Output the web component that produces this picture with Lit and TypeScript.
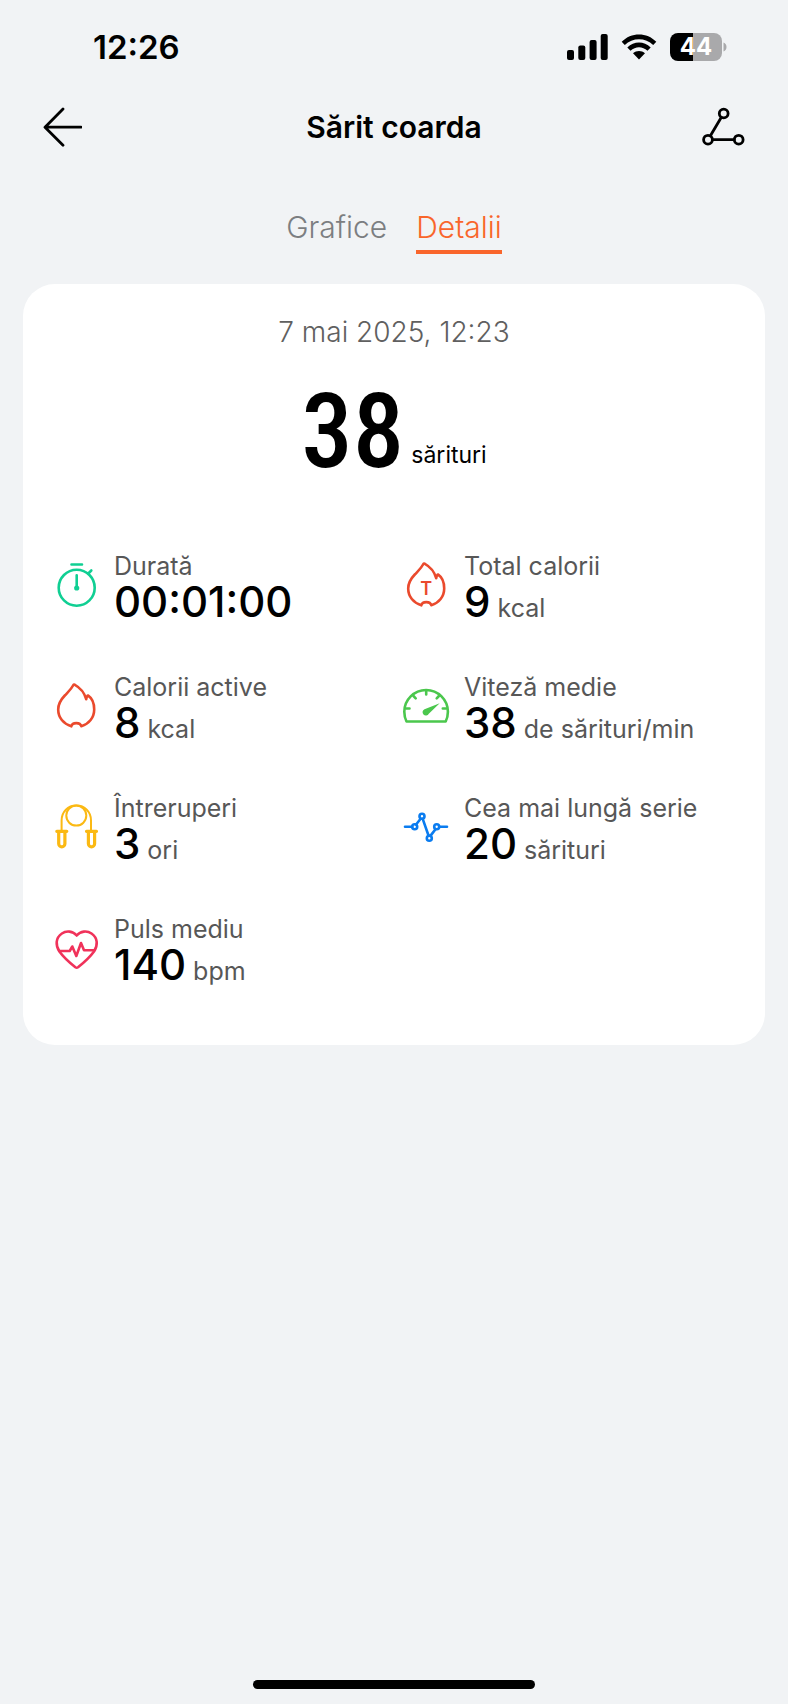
import { LitElement, html, svg, css, type TemplateResult } from "lit";
import { customElement, property, state } from "lit/decorators.js";
import { classMap } from "lit/directives/class-map.js";

interface Metric {
  icon: string;
  label: string;
  value: string;
  unit?: string;
}

const METRICS: Metric[] = [
  { icon: "timer", label: "Durată", value: "00:01:00" },
  { icon: "flame-total", label: "Total calorii", value: "9", unit: "kcal" },
  { icon: "flame", label: "Calorii active", value: "8", unit: "kcal" },
  { icon: "gauge", label: "Viteză medie", value: "38", unit: "de sărituri/min" },
  { icon: "rope", label: "Întreruperi", value: "3", unit: "ori" },
  { icon: "streak", label: "Cea mai lungă serie", value: "20", unit: "sărituri" },
  { icon: "heart", label: "Puls mediu", value: "140", unit: "bpm" },
];

const flame = svg`<path d="M21.4 2C19 6.500 16.500 8.500 12.800 12.500C8.500 17 6.200 21 6.200 26.500C6.200 34.500 11.500 41 19.300 43.300C20.300 39 28.300 39 29.300 43.300C37 41 42.200 34.500 42.200 26.500C42.200 20 40.500 15.500 36.200 12.600C35.400 12.400 34.600 13.600 34.200 16.200C32.700 10.500 28 4.500 22.900 1.800C22.200 1.500 21.700 1.500 21.400 2Z"/>`;

const ICONS: Record<string, TemplateResult> = {
  timer: svg`<circle cx="24.7" cy="25.700" r="18"/><path d="M19.500 2.500H30M36.300 11.500L39.300 8.500M24.700 13.300V25"/><circle class="solid" cx="24.700" cy="26" r="2.600"/>`,
  "flame-total": svg`${flame}<text class="letter" x="24.300" y="33" text-anchor="middle">T</text>`,
  flame,
  gauge: svg`<path d="M4.500 38.500C3 35.500 2.300 32 2.300 28.800A21.800 21.800 0 0 1 45.900 28.800C45.900 32 45.200 35.500 43.700 38.500Z"/><path d="M24.200 7.500V11.500M11.500 13L13.700 15.300M36.900 13L34.700 15.300M4 25.500H7.500M44.300 25.500H40.800"/><path class="solid" d="M37.700 20.300L22.500 26.200A3.300 3.300 0 1 0 26.800 30.700Z"/>`,
  rope: svg`<g class="thin"><circle cx="24.300" cy="11.600" r="10"/><path d="M9.600 27V16.500C9.600 7.500 16 1.600 24.300 1.600S39 7.500 39 16.500V27"/></g><path class="grip" d="M4.800 27.300H14.800M34.500 27.300H44.500M6.700 28V39.800A3.100 3.100 0 0 0 12.900 39.800V28M36.400 28V39.800A3.100 3.100 0 0 0 42.600 39.800V28"/>`,
  streak: svg`<path d="M3 22.700H10.200M14.100 20.500L18.600 14.700M20.700 14.900L26.600 31.700M28.400 31.900L33.500 25.200M37.300 22.700H45"/><circle cx="12.700" cy="22.700" r="2.500"/><circle cx="20" cy="12.300" r="2.500"/><circle cx="27.300" cy="34.300" r="2.500"/><circle cx="34.700" cy="22.700" r="2.500"/>`,
  heart: svg`<path d="M24.700 10.500C28.500 6 35 5.300 39.500 8.500C46 13 46 20.500 42 26.500C38 32 31 38.300 26 42.300Q24.700 43.200 23.400 42.300C18.400 38.300 11.400 32 7.400 26.500C3.400 20.500 3.400 13 9.900 8.500C14.400 5.300 20.900 6 24.700 10.500Z"/><path d="M7.500 26H17.700L20.300 21.500L24.300 31L29 18L32 25.300H42.200"/>`,
};

@customElement("metric-item")
export class MetricItem extends LitElement {
  @property({ attribute: false }) metric!: Metric;

  static styles = css`
    :host {
      display: flex;
      align-items: center;
      gap: 14px;
      padding-left: 8px;
    }
    .icon {
      flex: none;
      width: 48px;
      height: 48px;
      overflow: visible;
      fill: none;
      stroke: currentColor;
      stroke-width: 2.6;
      stroke-linecap: round;
      stroke-linejoin: round;
    }
    .thin {
      stroke-width: 2;
    }
    .grip {
      stroke-width: 3.2;
    }
    .solid {
      fill: currentColor;
      stroke: none;
    }
    .letter {
      fill: currentColor;
      stroke: none;
      font: 600 18px Inter, sans-serif;
    }
    .timer { color: #10cf93; }
    .flame-total, .flame { color: #ea4a2d; }
    .gauge { color: #4bc74d; }
    .rope { color: #fbb913; }
    .streak { color: #0a7cf0; }
    .heart { color: #f0325a; }
    .label {
      font-size: 25px;
      line-height: 32px;
      color: #575757;
      white-space: nowrap;
    }
    .reading {
      display: flex;
      align-items: baseline;
      gap: 7px;
      white-space: nowrap;
    }
    .value {
      font-size: 42px;
      font-weight: 500;
      line-height: 40px;
      color: #000;
    }
    .unit {
      font-size: 25px;
      line-height: 24px;
      color: #575757;
    }
  `;

  render() {
    const { icon, label, value, unit } = this.metric;
    return html`
      <svg class="icon ${icon}" viewBox="0 0 48 48" aria-hidden="true">${ICONS[icon]}</svg>
      <div>
        <div class="label">${label}</div>
        <div class="reading">
          <span class="value">${value}</span>
          ${unit ? html`<span class="unit">${unit}</span>` : null}
        </div>
      </div>
    `;
  }
}

@customElement("app-root")
export class AppRoot extends LitElement {
  @state() private tab = "Detalii";

  static styles = css`
    :host {
      display: flex;
      flex-direction: column;
      box-sizing: border-box;
      min-height: 100vh;
      background: #f1f3f5;
      color: #000;
      font-family: Inter, "Noto Sans", sans-serif;
    }
    button {
      padding: 0;
      border: 0;
      background: none;
      color: inherit;
      font: inherit;
      cursor: pointer;
    }
    .status {
      display: flex;
      align-items: center;
      justify-content: space-between;
      height: 94px;
      padding: 0 61px 0 93px;
    }
    .time {
      font-size: 33px;
      font-weight: 600;
    }
    .indicators {
      display: flex;
      align-items: center;
      gap: 13px;
    }
    .battery {
      display: flex;
      align-items: center;
      gap: 1px;
    }
    .level {
      width: 52px;
      border-radius: 8px;
      background: linear-gradient(90deg, #000 44%, #a9a9ab 44%);
      color: #fff;
      font-size: 24px;
      font-weight: 700;
      line-height: 28px;
      text-align: center;
    }
    .bar {
      display: grid;
      grid-template-columns: 44px 1fr 44px;
      align-items: center;
      height: 66px;
      padding: 0 42px;
    }
    .bar button {
      display: flex;
    }
    .line {
      fill: none;
      stroke: #000;
      stroke-width: 2.8;
      stroke-linecap: round;
      stroke-linejoin: round;
    }
    .title {
      margin: 0;
      font-size: 30px;
      font-weight: 600;
      line-height: 36px;
      text-align: center;
    }
    .tabs {
      display: flex;
      justify-content: center;
      gap: 29px;
      padding: 49px 0 30px;
    }
    .tabs .tab {
      padding-bottom: 5px;
      border-bottom: 4px solid transparent;
      color: #7c7e81;
      font-size: 30px;
      font-weight: 300;
      line-height: 36px;
    }
    .tabs .active {
      border-color: #f9652b;
      color: #f9652b;
    }
    .card {
      margin: 0 23px;
      padding: 32px 21px 60px;
      border-radius: 32px;
      background: #fff;
    }
    .date {
      color: #606060;
      font-size: 28px;
      font-weight: 300;
      line-height: 32px;
      text-align: center;
    }
    .hero {
      display: flex;
      align-items: flex-end;
      justify-content: center;
      gap: 7px;
      margin: 44px 0 78px;
    }
    .count {
      font-family: "Roboto Condensed", "Liberation Sans Narrow", Roboto, sans-serif;
      font-size: 103px;
      font-weight: 500;
      line-height: 80px;
    }
    .count-unit {
      font-size: 23px;
      line-height: 34px;
    }
    .metrics {
      display: grid;
      grid-template-columns: 1fr 1fr;
      row-gap: 49px;
    }
    .home {
      width: 282px;
      height: 9px;
      margin: auto auto 15px;
      border-radius: 5px;
      background: #000;
    }
  `;

  private renderTab(name: string) {
    const active = this.tab === name;
    return html`<button
      class=${classMap({ tab: true, active })}
      role="tab"
      aria-selected=${active}
      @click=${() => (this.tab = name)}
    >${name}</button>`;
  }

  render() {
    return html`
      <div class="status">
        <span class="time">12:26</span>
        <div class="indicators">
          <svg width="41" height="26" viewBox="0 0 41 26" aria-hidden="true">
            <rect x="0" y="16" width="7" height="10" rx="2" />
            <rect x="11.300" y="11.500" width="7" height="14.500" rx="2" />
            <rect x="22.600" y="6" width="7" height="20" rx="2" />
            <rect x="33.700" y="0" width="7" height="26" rx="2" />
          </svg>
          <svg width="36" height="26" viewBox="0 0 36 26" aria-hidden="true">
            <path d="M0.700 7.800C10 -2 26 -2 35.300 7.800L32.200 11C24.500 3.200 11.500 3.200 3.800 11Z" />
            <path d="M6.300 13.500C13 6.900 23 6.900 29.700 13.500L26.500 16.700C21.500 12 14.500 12 9.500 16.700Z" />
            <path d="M12 19.300C15.500 16.200 20.500 16.200 24 19.300L18 25.500Z" />
          </svg>
          <div class="battery">
            <div class="level">44</div>
            <svg width="4" height="10" viewBox="0 0 4 10" aria-hidden="true">
              <path d="M0.500 0.500C4.500 2 4.500 8 0.500 9.500Z" fill="#a9a9ab" />
            </svg>
          </div>
        </div>
      </div>

      <header class="bar">
        <button aria-label="Înapoi">
          <svg class="line" width="40" height="40" viewBox="0 0 40 40">
            <path d="M21 2L3 20.200L21 38.300M3.500 20.200H39" />
          </svg>
        </button>
        <h1 class="title">Sărit coarda</h1>
        <button aria-label="Traseu">
          <svg class="line" width="44" height="40" viewBox="0 0 44 40">
            <circle cx="21.700" cy="6.500" r="4.400" />
            <circle cx="6" cy="32.700" r="4.400" />
            <circle cx="36.700" cy="32.700" r="4.400" />
            <path d="M19.200 10.500L8.400 28.700M10.500 32.700H32.200" />
          </svg>
        </button>
      </header>

      <nav class="tabs" role="tablist">${this.renderTab("Grafice")}${this.renderTab("Detalii")}</nav>

      <main class="card">
        <div class="date">7 mai 2025, 12:23</div>
        <div class="hero">
          <span class="count">38</span>
          <span class="count-unit">sărituri</span>
        </div>
        <div class="metrics">
          ${METRICS.map((m) => html`<metric-item .metric=${m}></metric-item>`)}
        </div>
      </main>

      <div class="home"></div>
    `;
  }
}
